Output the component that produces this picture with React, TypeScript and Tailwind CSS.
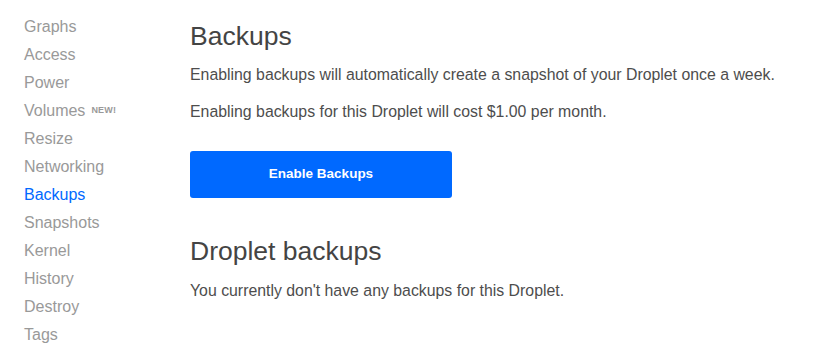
import React from 'react';

const navItems = [
  'Graphs',
  'Access',
  'Power',
  'Volumes',
  'Resize',
  'Networking',
  'Backups',
  'Snapshots',
  'Kernel',
  'History',
  'Destroy',
  'Tags',
];

export default function App() {
  return (
    <div className="flex min-h-screen bg-white font-['Liberation_Sans',Arial,sans-serif] text-[#4d4d4d]">
      {/* Sidebar */}
      <nav className="w-[190px] shrink-0 pl-6 pt-[13px]">
        <ul>
          {navItems.map((item) => (
            <li key={item} className="h-7 flex items-center text-[16px]">
              <span className={item === 'Backups' ? 'text-[#0069ff]' : 'text-[#999999]'}>{item}</span>
              {item === 'Volumes' && (
                <span className="ml-[6px] text-[9px] font-bold text-[#999999] tracking-[0.02em]">NEW!</span>
              )}
            </li>
          ))}
        </ul>
      </nav>

      {/* Main */}
      <main className="flex-1 pt-[20px]">
        <h1 className="text-[26.5px] leading-8 text-[#444444]">Backups</h1>
        <p className="mt-[13px] text-[15.85px] leading-5">
          Enabling backups will automatically create a snapshot of your Droplet once a week.
        </p>
        <p className="mt-[17px] text-[15.85px] leading-5">
          Enabling backups for this Droplet will cost $1.00 per month.
        </p>
        <button className="mt-[29px] w-[262px] h-[47px] rounded-[3px] bg-[#0069ff] text-white text-[13.5px] font-bold">
          Enable Backups
        </button>
        <h2 className="mt-[37px] text-[26.5px] leading-8 text-[#444444]">Droplet backups</h2>
        <p className="mt-[14px] text-[15.85px] leading-5">
          You currently don't have any backups for this Droplet.
        </p>
      </main>
    </div>
  );
}
